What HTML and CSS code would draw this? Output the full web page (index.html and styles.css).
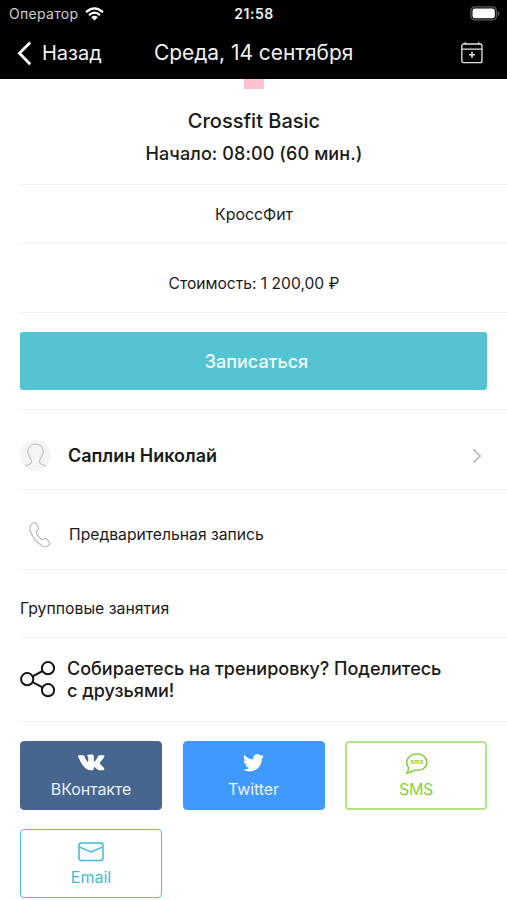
FILE: index.html
```html
<!DOCTYPE html>
<html lang="ru">
<head>
<meta charset="utf-8">
<title>Среда, 14 сентября</title>
<link rel="stylesheet" href="styles.css">
</head>
<body>
<header class="header">
  <div class="status">
    <div class="carrier"><span class="operator">Оператор</span>
      <svg width="19" height="14" viewBox="0 0 19 14" fill="none" stroke="#fff" stroke-width="2.2"><path d="M1 5.2Q9.5-2.5 18 5.2M4 8.2Q9.5 3.2 15 8.2"/><path d="M9.5 13.5 6.2 10.2Q9.5 7.4 12.8 10.2Z" fill="#fff" stroke="none"/></svg>
    </div>
    <span class="clock">21:58</span>
    <svg class="battery" width="30" height="15" viewBox="0 0 30 15"><rect x=".9" y=".9" width="25.5" height="13" rx="4" fill="none" stroke="#5c5c5c" stroke-width="1.3"/><rect x="2.5" y="2.5" width="22.3" height="9.8" rx="2.4" fill="#fff"/><path d="M27.8 5v5q1.7-.7 1.7-2.5T27.8 5" fill="#5c5c5c"/></svg>
  </div>
  <nav class="nav">
    <div class="back"><svg width="15" height="25" viewBox="0 0 15 25" fill="none" stroke="#fff" stroke-width="2.8"><path d="M13.2 1.5 2.4 12.3 13.2 23.2"/></svg><span class="back-label">Назад</span></div>
    <h1 class="title"><span>Среда, 14 сентября</span></h1>
    <svg class="calendar" width="22" height="22" viewBox="0 0 22 22" fill="none" stroke="#e4e4e4" stroke-width="1.3"><rect x=".8" y="2" width="20.2" height="18.7" rx="2"/><path d="M1 7.2h20M4.2 .3v2M17.6 .3v2"/><path d="M11 9.8v6M8 12.8h6" stroke-width="1.6"/></svg>
  </nav>
</header>
<main>
  <div class="marker"></div>
  <section class="row summary"><h2 class="name">Crossfit Basic</h2><p class="start">Начало: 08:00 (60 мин.)</p></section>
  <section class="row kind"><span class="kind-text">КроссФит</span></section>
  <section class="row price"><span class="price-text">Стоимость: 1 200,00 ₽</span></section>
  <section class="row signup"><button class="book"><span>Записаться</span></button></section>
  <section class="row coach">
    <div class="avatar"><svg width="30" height="30" viewBox="0 0 30 30" fill="none" stroke="#c6c6c6" stroke-width="1.3"><path d="M5 26.2C7 24.8 11.6 25 11.6 21.6C11.6 19 8.9 17.2 8.6 14C7.5 13.6 7.2 10.6 8.4 10C8.2 6.2 11 4.2 15.5 4.2S22.8 6.2 22.6 10C23.8 10.6 23.5 13.6 22.4 14C22.1 17.2 19.4 19 19.4 21.6C19.4 25 24 24.8 26 26.2"/></svg></div>
    <span class="coach-name">Саплин Николай</span>
    <svg class="chevron" width="10" height="16" viewBox="0 0 10 16" fill="none" stroke="#c3c3c3" stroke-width="2"><path d="M1.2 1.2 8 8 1.2 14.8"/></svg>
  </section>
  <section class="row phone">
    <svg width="22" height="26" viewBox="0 0 22 26" fill="none" stroke="#bdbdbd" stroke-width="1.3" stroke-linejoin="round"><path d="M2.6 2.1Q5-.2 7.1 1.3Q9.5 4.5 9.7 6.3Q9.6 7.7 8.1 8.7Q6.8 9.7 7.6 11.5Q9.3 14.8 12.1 17.2Q13.5 18.2 14.7 17.1Q16 15.8 17.5 16.8L20.3 20.2Q21.3 22 19.4 23.4Q16.8 25.5 13.5 24Q5.6 19.5 1.9 10.6Q-.5 5.4 2.6 2.1Z"/></svg>
    <span class="phone-text">Предварительная запись</span>
  </section>
  <section class="row group"><span class="group-text">Групповые занятия</span></section>
  <section class="row invite">
    <svg width="36" height="38" viewBox="0 0 36 38" fill="none" stroke="#141414" stroke-width="2"><circle cx="7.2" cy="19.2" r="6.1"/><circle cx="28" cy="8.2" r="6.1"/><circle cx="28" cy="30.2" r="6.1"/><path d="M12.6 16.3 22.6 11M12.6 22.1 22.6 27.4"/></svg>
    <p class="invite-text">Собираетесь на тренировку? Поделитесь<br><span class="invite-end">с друзьями!</span></p>
  </section>
  <section class="shares">
    <button class="share vk"><svg width="27" height="17" viewBox="0 0 27 17"><path fill="#fff" d="M.5 1.2h4.6q.9 0 1.3 1Q8.2 6.7 9.5 7.8q.8.4.8-1V4q0-1.8-1.5-2.2Q9.8.5 12.2.5h2q1.6 0 1.6 1.8v4.5q.1 1.5 1 .7Q18.8 5.4 20 2.2q.4-1 1.4-1h4.3q1.2.1.4 1.8-1 2.2-3.8 5.3-.8 1 .1 1.9 2.7 2.5 3.6 4 .9 1.8-1 2h-4.2q-1.2-.2-2.3-1.5-1.7-2-2.2-1.8-.6.3-.6 1.8 0 1.5-1.3 1.5h-2q-4 0-7.2-4.4Q2.4 8.1.2 2.8-.3 1.4.5 1.2Z"/></svg><span class="vk-text">ВКонтакте</span></button>
    <button class="share twitter"><svg width="21" height="18" viewBox="0 0 24 20"><path fill="#fff" d="M24 2.4a10 10 0 0 1-2.8.8A5 5 0 0 0 23.4.4a10 10 0 0 1-3.1 1.2A4.9 4.9 0 0 0 11.8 6 14 14 0 0 1 1.7.9a4.9 4.9 0 0 0 1.5 6.6A5 5 0 0 1 1 6.9a4.9 4.9 0 0 0 3.9 4.9 5 5 0 0 1-2.2.1 4.9 4.9 0 0 0 4.6 3.4A9.9 9.9 0 0 1 0 17.4 14 14 0 0 0 21.5 5 10 10 0 0 0 24 2.4Z"/></svg><span class="tw-text">Twitter</span></button>
    <button class="share sms"><svg width="23" height="21" viewBox="0 0 23 21" fill="none" stroke="#85d143" stroke-width="1.6"><path d="M3.3 14.4C-.7 8.6 3.4 1 12 1C18 1 21.8 4.4 21.8 9.3C21.8 15.4 16.3 17.5 11 17.3C8 17.2 6.2 19.4 2 20C3.7 17.6 3.7 16.3 3.3 14.4Z"/><text class="sms-glyph" x="11.9" y="11.4" text-anchor="middle" textLength="13">sms</text></svg><span class="sms-text">SMS</span></button>
    <button class="share email"><svg width="26" height="20" viewBox="0 0 26 20" fill="none" stroke="#3dbbd9" stroke-width="1.5"><rect x="1" y="1" width="24" height="17.6" rx="2.5"/><path d="M1.4 5.1 13 10 24.6 5.1"/></svg><span class="mail-text">Email</span></button>
  </section>
</main>
</body>
</html>
```
FILE: styles.css
```css
* { box-sizing: border-box; margin: 0; }
body { background: #fff; color: #1a1a1a; font-family: Inter, "Liberation Sans", sans-serif; overflow: hidden; }
svg { display: block; flex: none; }
span { white-space: nowrap; }
.header { height: 79px; background: #000; color: #f2f2f2; }
.status { height: 27px; display: grid; grid-template-columns: 1fr auto 1fr; align-items: center; padding: 0 7px 0 9px; }
.carrier { display: flex; align-items: center; gap: 7px; }
.operator { font-size: 14px; color: #d0d0d0; letter-spacing: .3px; }
.clock { font-size: 14px; font-weight: 600; letter-spacing: .5px; margin-left: -1px; }
.battery { justify-self: end; }
.nav { height: 52px; display: grid; grid-template-columns: 120px 1fr 120px; align-items: center; padding: 0 24px 0 17px; }
.back { display: flex; align-items: center; gap: 10px; font-size: 20px; }
.title { font-size: 20.9px; font-weight: 400; line-height: 24px; padding-left: 17px; margin-top: -1px; }
.calendar { justify-self: end; }
.marker { width: 20px; height: 10px; margin: 0 auto; background: #ffc0cf; }
.row { margin-left: 20px; border-bottom: 1px solid #f2f2f2; display: flex; align-items: center; }
.summary { height: 96px; flex-direction: column; padding: 18px 19px 0 0; }
.name { font-size: 20px; font-weight: 500; line-height: 28px; }
.start { font-size: 18px; font-weight: 500; line-height: 24px; letter-spacing: .1px; margin-top: 7px; }
.kind, .price { justify-content: center; padding-right: 19px; }
.kind { height: 59px; font-size: 15.9px; }
.price { height: 69px; padding-top: 10px; font-size: 15.6px; }
.signup { height: 97px; padding-right: 20px; }
.book { width: 100%; height: 58px; border: 0; border-radius: 3px; background: #55c4d2; color: #f2fcfd; font: 500 18px Inter; padding: 0 0 0 6px; }
.coach { height: 80px; padding: 12px 25px 0 0; }
.avatar { width: 31px; height: 31px; border-radius: 50%; background: #f5f5f5; }
.coach-name { margin-left: 17px; font-size: 18px; font-weight: 600; }
.chevron { margin-left: auto; }
.phone { height: 80px; padding: 10px 0 0 9px; font-size: 15.7px; }
.phone-text { margin-left: 18px; }
.group { height: 68px; padding-top: 10px; font-size: 15.8px; }
.invite { height: 84px; }
.invite svg { margin-top: -2px; }
.invite-text { margin-left: 11px; font-size: 18px; line-height: 22px; font-weight: 500; white-space: nowrap; }
.shares { display: grid; grid-template-columns: repeat(3, 142px); gap: 19px 20.5px; padding: 19px 20px 0; }
.share { height: 69px; border: 1.5px solid; border-radius: 4px; padding: 0; background: #fff; display: flex; flex-direction: column; align-items: center; font: 400 16px Inter; }
.share svg { margin-top: 12px; }
.share span { line-height: 20px; margin-top: auto; margin-bottom: 10px; }
.vk { background: #46658f; border-color: #46658f; }
.twitter { background: #4099ff; border-color: #4099ff; }
.vk span, .twitter span { color: #e8f1fb; }
.vk-text { letter-spacing: -.1px; }
.tw-text { letter-spacing: -.1px; }
.sms { border: 2px solid #b2e584; color: #85d143; }
.share.sms svg { margin-top: 10px; }
.share.sms span { margin-bottom: 9px; }
.email { border-color: #46c2dd; color: #3dbbd9; }
.sms-text { letter-spacing: -.4px; }
.sms-glyph { font: 700 6px Inter; fill: #85d143; stroke: none; }
```
